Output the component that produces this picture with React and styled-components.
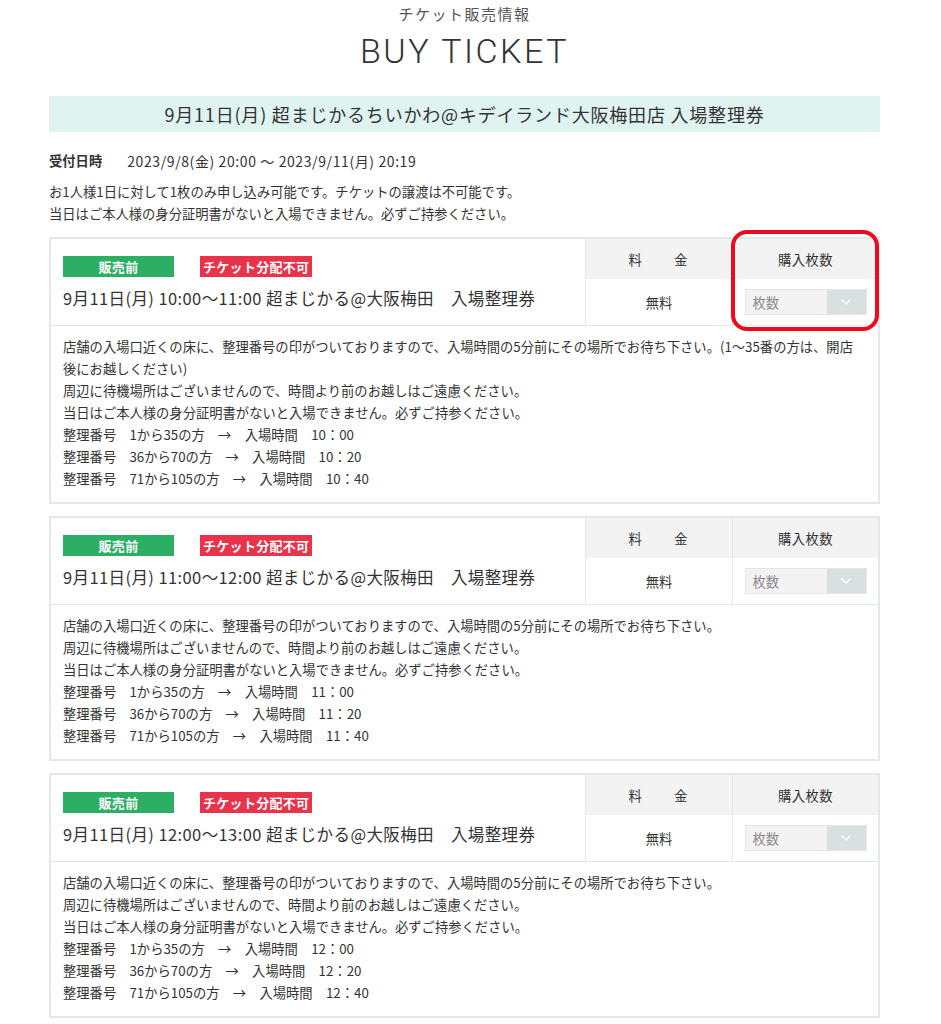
import React from 'react';
import styled, { createGlobalStyle } from 'styled-components';

const GlobalStyle = createGlobalStyle`
  body {
    margin: 0;
    background: #fff;
    color: #333;
    font-family: "Noto Sans CJK JP", "Noto Sans", sans-serif;
  }
`;

const Page = styled.div`
  width: 831px;
  margin-left: 49px;
  padding-top: 4px;
`;

const Heading = styled.header`
  display: flex;
  flex-direction: column;
  align-items: center;
`;

const SubTitle = styled.div`
  font-size: 15px;
  line-height: 20px;
  letter-spacing: 1.5px;
  color: #555;
`;

const MainTitle = styled.h1`
  margin: 7px 0 0;
  font-family: Roboto, "Liberation Sans", sans-serif;
  font-weight: 300;
  font-size: 34px;
  line-height: 40px;
  letter-spacing: 2.5px;
  color: #333;
`;

const Banner = styled.div`
  margin-top: 25px;
  height: 36px;
  display: flex;
  align-items: center;
  justify-content: center;
  background: #dff3f1;
  font-size: 18px;
  letter-spacing: 0.8px;
  color: #333;
`;

const Reception = styled.div`
  margin-top: 19px;
  display: flex;
  align-items: center;
  gap: 25px;
  line-height: 20px;
`;

const ReceptionLabel = styled.span`
  font-size: 13.3px;
  font-weight: 700;
`;

const ReceptionDate = styled.span`
  font-size: 14px;
  letter-spacing: 0.6px;
`;

const Notes = styled.div`
  margin-top: 10px;
  font-size: 13.3px;
  line-height: 22px;
`;

const CardList = styled.div`
  margin-top: 12px;
  display: flex;
  flex-direction: column;
  gap: 12px;
`;

const Card = styled.section`
  border: 2px solid #e3e8e8;
`;

const CardHead = styled.div`
  position: relative;
  display: grid;
  grid-template-columns: 1fr 147px 146px;
  border-bottom: 1px solid #e3e8e8;
`;

const Info = styled.div`
  padding: 17px 12px 16px;
`;

const Badges = styled.div`
  display: flex;
  gap: 26px;
`;

const Badge = styled.span`
  height: 21px;
  display: flex;
  align-items: center;
  justify-content: center;
  min-width: ${p => (p.$wide ? '111px' : 'auto')};
  padding: 0 3px;
  box-sizing: border-box;
  background: ${p => p.$bg};
  color: #fff;
  font-size: 13px;
  font-weight: 700;
  letter-spacing: 0.3px;
`;

const EventName = styled.div`
  margin-top: 10px;
  font-size: 16.5px;
  line-height: 22px;
  letter-spacing: 0.4px;
`;

const Column = styled.div`
  display: flex;
  flex-direction: column;
  border-left: 1px solid #e3e8e8;
`;

const ColHead = styled.div`
  height: 40px;
  display: flex;
  align-items: center;
  justify-content: center;
  background: #f3f3f3;
  font-size: 13.3px;
  letter-spacing: ${p => (p.$spaced ? '2px' : '0.5px')};
`;

const ColBody = styled.div`
  flex: 1;
  display: flex;
  align-items: center;
  justify-content: center;
  font-size: 13.3px;
`;

const Select = styled.div`
  width: 122px;
  height: 26px;
  display: flex;
  border: 1px solid #e2e6e6;
  box-sizing: border-box;
`;

const SelectValue = styled.div`
  flex: 1;
  display: flex;
  align-items: center;
  padding-left: 7px;
  background: #f3f3f3;
  color: #8a8a8a;
  font-size: 13.3px;
`;

const SelectArrow = styled.div`
  width: 39px;
  display: flex;
  align-items: center;
  justify-content: center;
  background: #d9e0e0;
`;

// red marker drawn over the purchase column of the first card
const Highlight = styled.div`
  position: absolute;
  top: -9px;
  bottom: -6px;
  right: -1px;
  width: 148px;
  border: 4px solid #ee0a1e;
  border-radius: 16px;
  box-sizing: border-box;
  pointer-events: none;
`;

const Details = styled.div`
  padding: 10px 8px 12px 12px;
  font-size: 13.3px;
  line-height: 22px;
`;

const Chevron = () => (
  <svg width="12" height="8" viewBox="0 0 12 8" fill="none">
    <path d="M1.5 1.5 L6 6 L10.5 1.5" stroke="#fff" strokeWidth="1.4" />
  </svg>
);

const slots = [
  { start: '10:00', end: '11:00', times: ['10：00', '10：20', '10：40'], first: true },
  { start: '11:00', end: '12:00', times: ['11：00', '11：20', '11：40'] },
  { start: '12:00', end: '13:00', times: ['12：00', '12：20', '12：40'] },
];

const TicketCard = ({ slot }) => (
  <Card>
    <CardHead>
      <Info>
        <Badges>
          <Badge $bg="#2caf64" $wide>販売前</Badge>
          <Badge $bg="#e8334a">チケット分配不可</Badge>
        </Badges>
        <EventName>
          9月11日(月) {slot.start}〜{slot.end} 超まじかる@大阪梅田　入場整理券
        </EventName>
      </Info>
      <Column>
        <ColHead $spaced>料　　金</ColHead>
        <ColBody>無料</ColBody>
      </Column>
      <Column>
        <ColHead>購入枚数</ColHead>
        <ColBody>
          <Select>
            <SelectValue>枚数</SelectValue>
            <SelectArrow>
              <Chevron />
            </SelectArrow>
          </Select>
        </ColBody>
      </Column>
      {slot.first && <Highlight />}
    </CardHead>
    <Details>
      店舗の入場口近くの床に、整理番号の印がついておりますので、入場時間の5分前にその場所でお待ち下さい。
      {slot.first && (
        <>
          (1〜35番の方は、開店
          <br />
          後にお越しください)
        </>
      )}
      <br />
      周辺に待機場所はございませんので、時間より前のお越しはご遠慮ください。
      <br />
      当日はご本人様の身分証明書がないと入場できません。必ずご持参ください。
      <br />
      整理番号　1から35の方　→　入場時間　{slot.times[0]}
      <br />
      整理番号　36から70の方　→　入場時間　{slot.times[1]}
      <br />
      整理番号　71から105の方　→　入場時間　{slot.times[2]}
    </Details>
  </Card>
);

const App = () => (
  <>
    <GlobalStyle />
    <Page>
      <Heading>
        <SubTitle>チケット販売情報</SubTitle>
        <MainTitle>BUY TICKET</MainTitle>
      </Heading>
      <Banner>9月11日(月) 超まじかるちいかわ@キデイランド大阪梅田店 入場整理券</Banner>
      <Reception>
        <ReceptionLabel>受付日時</ReceptionLabel>
        <ReceptionDate>2023/9/8(金) 20:00 ～ 2023/9/11(月) 20:19</ReceptionDate>
      </Reception>
      <Notes>
        お1人様1日に対して1枚のみ申し込み可能です。チケットの譲渡は不可能です。
        <br />
        当日はご本人様の身分証明書がないと入場できません。必ずご持参ください。
      </Notes>
      <CardList>
        {slots.map(slot => (
          <TicketCard key={slot.start} slot={slot} />
        ))}
      </CardList>
    </Page>
  </>
);

export default App;
